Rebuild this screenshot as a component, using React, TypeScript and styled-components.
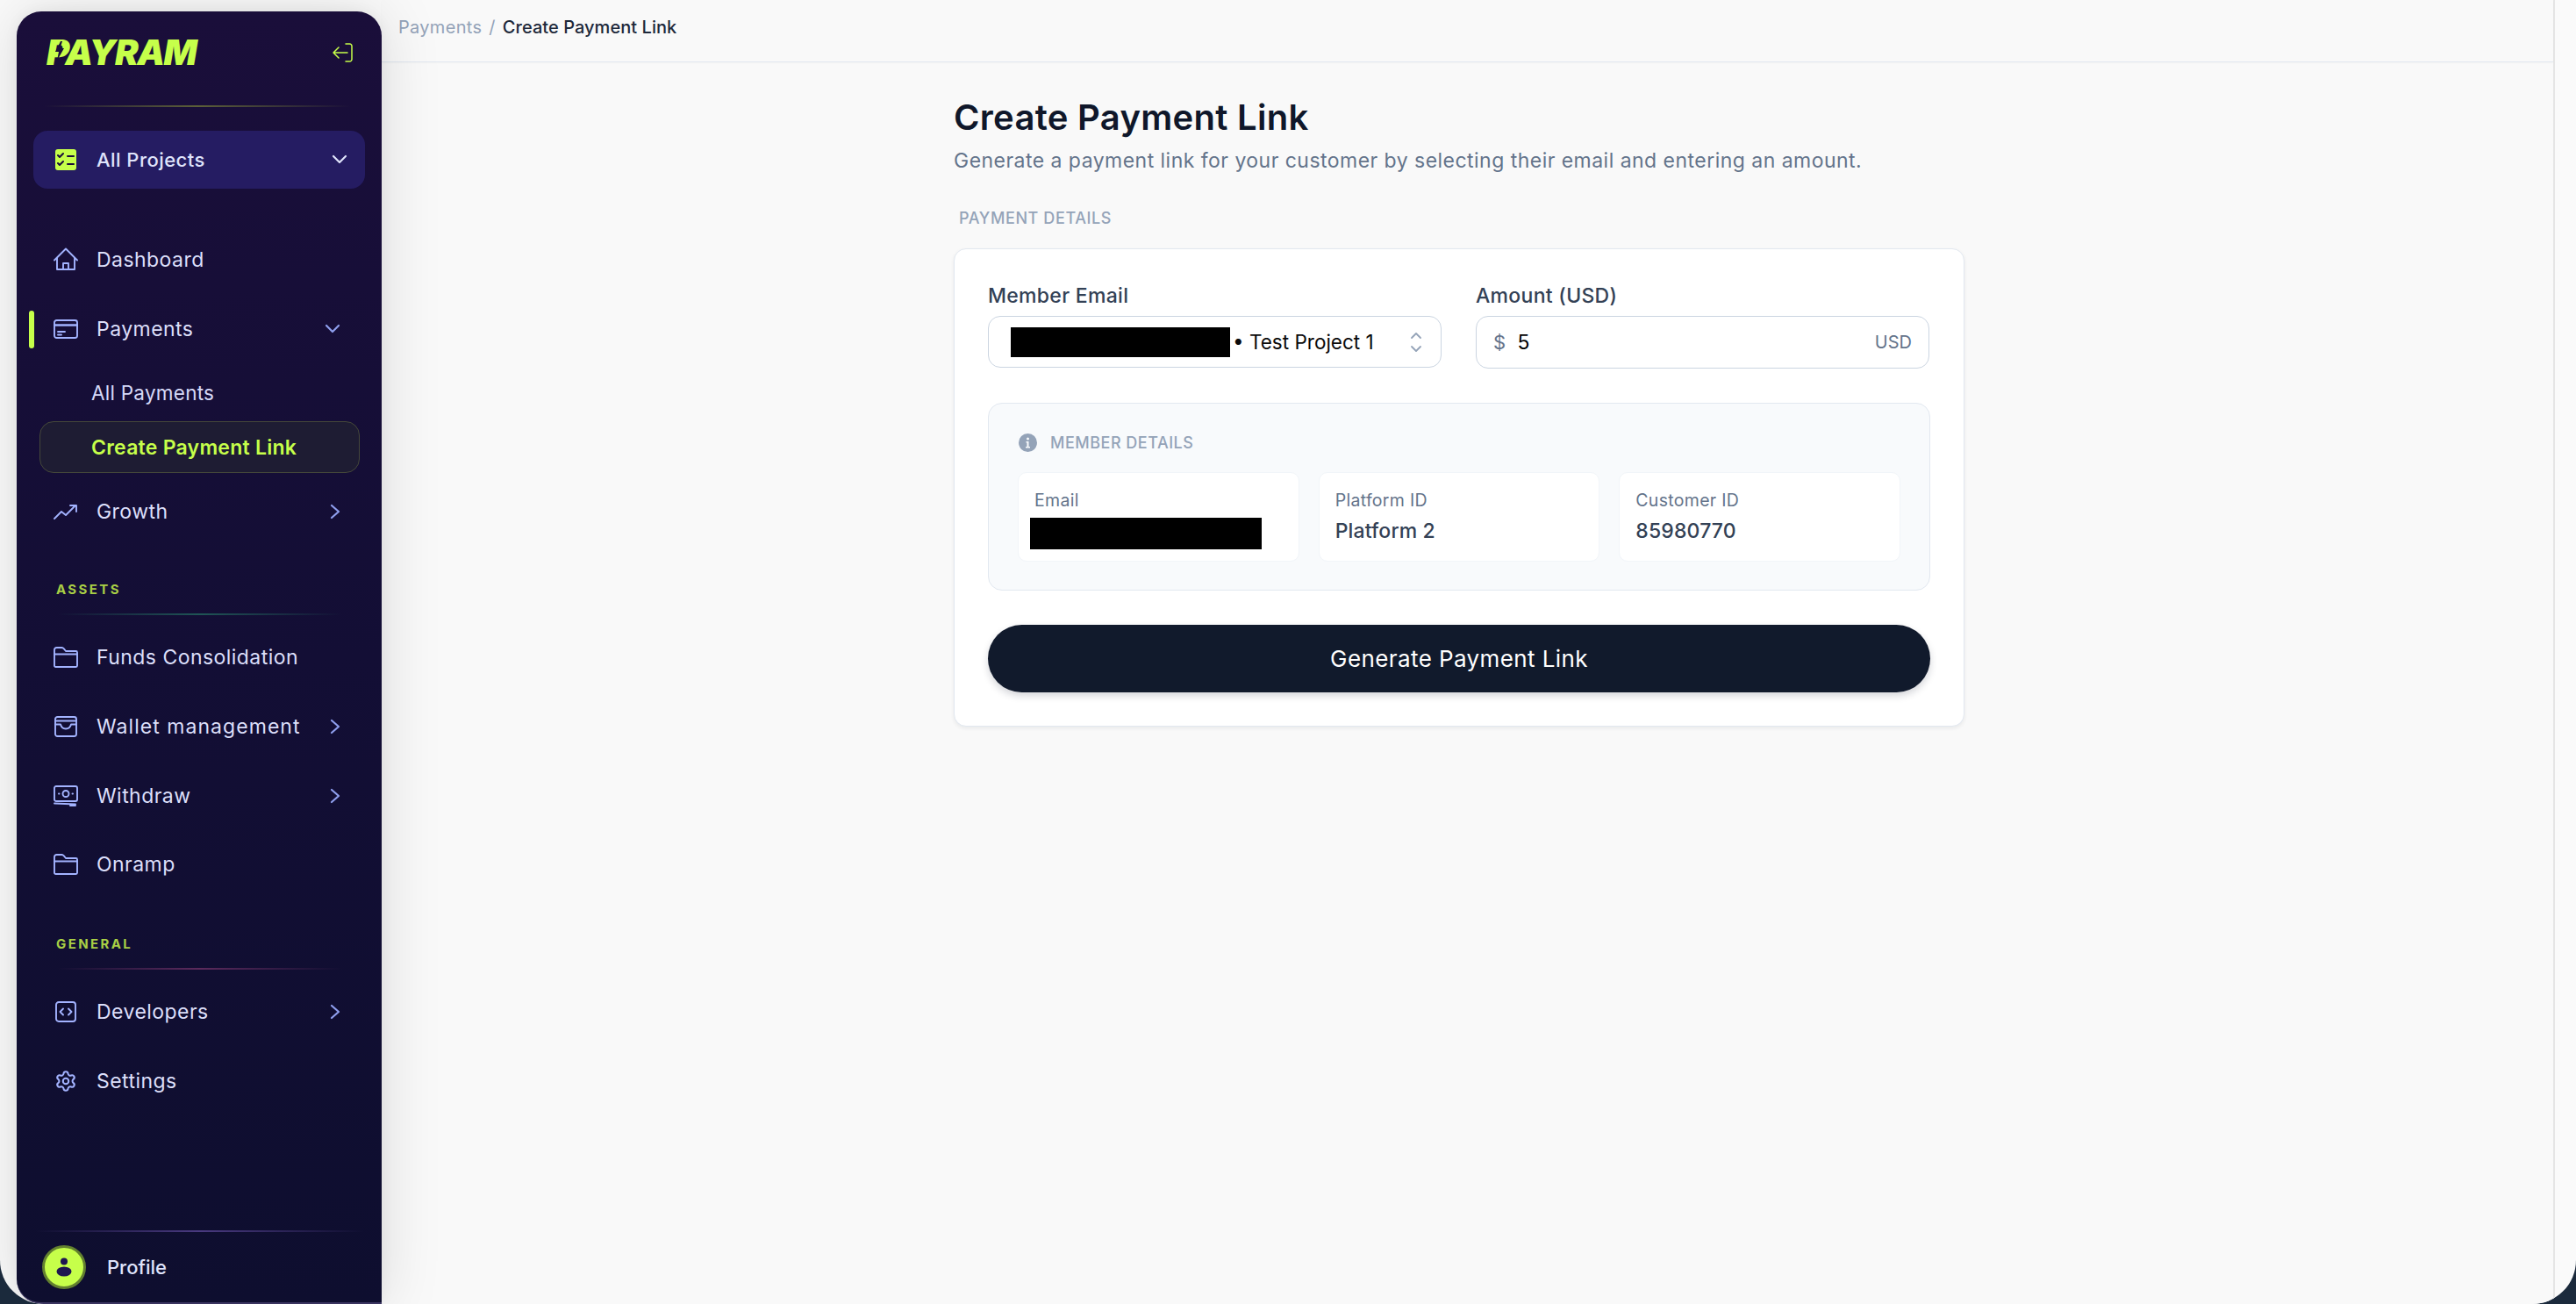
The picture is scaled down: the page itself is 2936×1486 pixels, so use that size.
import React from 'react';
import styled, { createGlobalStyle } from 'styled-components';

const GlobalStyle = createGlobalStyle`
  html, body {
    margin: 0;
    padding: 0;
    height: 100%;
    background: #1b2a3c;
  }
  * { box-sizing: border-box; }
  #root { height: 100%; }
`

const FONT = `Inter, "Liberation Sans", sans-serif`
const LIME = '#c6ff4a'

const Stroke = styled.svg`
  display: block;
  flex: none;
  fill: none;
  stroke: #a3b3ff;
  stroke-width: 1.9;
  stroke-linecap: round;
  stroke-linejoin: round;
`

const HomeIcon = () => (
  <Stroke width="28" height="28" viewBox="0 0 28 28">
    <path d="M1 14.5 14 1.5l13 13" />
    <path d="M4 12v13h20V12" />
    <path d="M11 25v-7h6v7" />
  </Stroke>
)
const CardIcon = () => (
  <Stroke width="28" height="22" viewBox="0 0 28 22">
    <rect x="1" y="1" width="26" height="20" rx="2.5" />
    <path d="M1 6.5h26" strokeWidth="2.4" />
    <path d="M5 14h8M5 17.5h4" />
  </Stroke>
)
const GrowthIcon = () => (
  <Stroke width="28" height="18" viewBox="0 0 28 18">
    <path d="M1 17 9 9l5 4 11-11" />
    <path d="M19 2h7v7" />
  </Stroke>
)
const FolderIcon = () => (
  <Stroke width="28" height="24" viewBox="0 0 28 24">
    <path d="M1 5V3.5A2.5 2.5 0 0 1 3.500 1h6c1 0 1.600.4 2.200 1.200L14 5h11.500A1.500 1.500 0 0 1 27 6.500V21.500a1.500 1.500 0 0 1-1.500 1.500h-23A1.500 1.500 0 0 1 1 21.500V5Z" />
    <path d="M1 8.500h26" />
  </Stroke>
)
const WalletIcon = () => (
  <Stroke width="26" height="24" viewBox="0 0 26 24">
    <rect x="1" y="1" width="24" height="22" rx="2.500" />
    <path d="M1 5.500h24M1 9.500h6c1 4 3 5 6 5s5-1 6-5h6" />
  </Stroke>
)
const CashIcon = () => (
  <Stroke width="28" height="24" viewBox="0 0 28 24">
    <rect x="1" y="1" width="26" height="17" rx="2" />
    <circle cx="14" cy="9.500" r="3.500" />
    <path d="M6 9.500h.5M21.500 9.500h.5M1 20.500l24 1M19 23h6" />
  </Stroke>
)
const CodeIcon = () => (
  <Stroke width="24" height="24" viewBox="0 0 24 24">
    <rect x="1" y="1" width="22" height="22" rx="3" />
    <path d="m9 8.500-3.500 3.500L9 15.500M15 8.500l3.500 3.500-3.500 3.500" />
  </Stroke>
)
const GearIcon = () => (
  <Stroke width="26" height="26" viewBox="0 0 24 24">
    <path d="M9.671 4.136a2.340 2.340 0 0 1 4.659 0 2.340 2.340 0 0 0 3.319 1.915 2.340 2.340 0 0 1 2.330 4.033 2.340 2.340 0 0 0 0 3.831 2.340 2.340 0 0 1-2.330 4.033 2.340 2.340 0 0 0-3.319 1.915 2.340 2.340 0 0 1-4.659 0 2.340 2.340 0 0 0-3.320-1.915 2.340 2.340 0 0 1-2.330-4.033 2.340 2.340 0 0 0 0-3.831A2.340 2.340 0 0 1 6.350 6.051a2.340 2.340 0 0 0 3.320-1.915" />
    <circle cx="12" cy="12" r="3" />
  </Stroke>
)
const ChevronRight = () => (
  <Stroke width="12" height="18" viewBox="0 0 12 18" style={{ stroke: '#8f9fee', strokeWidth: 2.2 }}>
    <path d="m2 2 8 7-8 7" />
  </Stroke>
)
const ChevronDown = ({ color = '#8f9fee' }: { color?: string }) => (
  <Stroke width="18" height="12" viewBox="0 0 18 12" style={{ stroke: color, strokeWidth: 2.2 }}>
    <path d="m2 2 7 7 7-7" />
  </Stroke>
)

const Window = styled.div`
  display: flex;
  height: 1486px;
  width: 2936px;
  overflow: hidden;
  background: #fafafa;
  border-radius: 0 0 50px 50px;
  font-family: ${FONT};
`

const Sidebar = styled.aside`
  position: relative;
  z-index: 2;
  display: flex;
  flex-direction: column;
  flex: none;
  width: 416px;
  margin: 13px 0 0 19px;
  border-radius: 28px 28px 0 28px;
  border-bottom: 2px solid #3b3560;
  background: linear-gradient(180deg, #1a0e3a 0%, #130e35 50%, #0e0e2f 100%);
  box-shadow: 0 0 70px rgba(0, 0, 0, 0.13), 0 0 16px rgba(0, 0, 0, 0.05);
`

const SideHeader = styled.div`
  display: flex;
  align-items: center;
  justify-content: space-between;
  height: 94px;
  padding: 0 33px 0 34px;
`

const LogoMark = styled.div`
  position: relative;
  color: ${LIME};
  font-size: 40px;
  line-height: 40px;
  font-weight: 900;
  font-style: italic;
  letter-spacing: -1.4px;
`

const LogoBolt = styled.svg`
  position: absolute;
  left: 10px;
  top: 7px;
`

const Rule = styled.div<{ $color: string; $left: number; $right: number; $top: number }>`
  flex: none;
  height: 2px;
  margin: ${p => p.$top}px ${p => p.$right}px 0 ${p => p.$left}px;
  background: linear-gradient(90deg, transparent, ${p => p.$color}, transparent);
`

const ProjectPicker = styled.div`
  display: flex;
  align-items: center;
  flex: none;
  height: 66px;
  margin: 27px 19px 0;
  padding: 0 20px 0 25px;
  border-radius: 16px;
  background: #251c62;
  color: #dfe3fb;
  font-size: 22px;
  font-weight: 500;
  letter-spacing: 0.45px;
`

const ProjectBadge = styled.div`
  display: flex;
  align-items: center;
  justify-content: center;
  width: 24px;
  height: 24px;
  margin-right: 23px;
  border-radius: 3px;
  background: ${LIME};
`

const Spacer = styled.span`
  flex: 1;
`

const Nav = styled.nav`
  display: flex;
  flex-direction: column;
  margin-top: 42px;
`

const Item = styled.div<{ $active?: boolean; $spread?: number; $top?: number }>`
  position: relative;
  display: flex;
  align-items: center;
  height: 78.700px;
  margin-top: ${p => p.$top || 0}px;
  padding: 0 47px 0 42px;
  color: #dcdffa;
  font-size: 23px;
  letter-spacing: ${p => p.$spread ?? 0.45}px;

  &::before {
    content: '';
    display: ${p => (p.$active ? 'block' : 'none')};
    position: absolute;
    left: 14px;
    top: 18px;
    width: 6px;
    height: 43px;
    border-radius: 3px;
    background: ${LIME};
  }
`

const IconSlot = styled.span`
  display: flex;
  align-items: center;
  justify-content: center;
  width: 28px;
  margin-right: 21px;
`

const SubList = styled.div`
  display: flex;
  flex-direction: column;
  gap: 8px;
  margin: 8px 25px 4px 26px;
`

const SubItem = styled.div<{ $active?: boolean }>`
  display: flex;
  align-items: center;
  height: ${p => (p.$active ? 59 : 50)}px;
  padding-left: 58px;
  border: 1px solid ${p => (p.$active ? '#45483a' : 'transparent')};
  border-radius: 16px;
  background: ${p => (p.$active ? '#1e1c33' : 'transparent')};
  color: ${p => (p.$active ? LIME : '#d5d9f8')};
  font-size: ${p => (p.$active ? 23 : 22.500)}px;
  font-weight: ${p => (p.$active ? 600 : 400)};
  letter-spacing: 0.25px;
`

const SectionLabel = styled.div<{ $top: number }>`
  height: 20px;
  margin: ${p => p.$top}px 0 0 45px;
  color: #a8cf45;
  font-size: 15px;
  line-height: 20px;
  font-weight: 700;
  letter-spacing: 2.4px;
`

const ProfileBox = styled.div`
  margin-top: auto;
`

const ProfileRow = styled.div`
  display: flex;
  align-items: center;
  height: 80px;
  padding-left: 29px;
  color: #dfe3fb;
  font-size: 22px;
  font-weight: 500;
`

const Avatar = styled.div`
  display: flex;
  align-items: center;
  justify-content: center;
  width: 50px;
  height: 50px;
  margin-right: 24px;
  border: 3px solid #62802f;
  border-radius: 50%;
  background: ${LIME};
`

const Main = styled.main`
  display: flex;
  flex-direction: column;
  flex: none;
  width: 2477px;
  border-right: 2px solid #e5e5e5;
  background: #f9f9f9;
`

const TopBar = styled.header`
  display: flex;
  align-items: center;
  flex: none;
  gap: 8px;
  height: 71px;
  padding: 0 0 8px 19px;
  border-bottom: 1px solid #e2e8f0;
  box-shadow: 0 1px 2px rgba(15, 23, 42, 0.03);
  font-size: 20px;
`

const Crumb = styled.span<{ $current?: boolean }>`
  color: ${p => (p.$current ? '#1e293b' : '#94a3b8')};
  font-weight: ${p => (p.$current ? 500 : 400)};
  letter-spacing: ${p => (p.$current ? 0.05 : 0.3)}px;
`

const Content = styled.div`
  width: 1804px;
  padding: 40px 0 0 652px;
`

const Title = styled.h1`
  margin: 0;
  color: #0f172a;
  font-size: 40px;
  line-height: 46px;
  font-weight: 600;
  letter-spacing: 0.3px;
`

const Subtitle = styled.p`
  margin: 10px 0 0;
  color: #64748b;
  font-size: 23px;
  line-height: 32px;
  letter-spacing: 0.47px;
`

const Caption = styled.div`
  margin: 38px 0 0 6px;
  color: #94a3b8;
  font-size: 18px;
  line-height: 24px;
  font-weight: 500;
  letter-spacing: 0.6px;
`

const Card = styled.section`
  margin-top: 22px;
  padding: 39px 38px 38px;
  border: 1px solid #e2e8f0;
  border-radius: 14px;
  background: #fff;
  box-shadow: 0 2px 4px rgba(15, 23, 42, 0.07);
`

const Fields = styled.div`
  display: grid;
  grid-template-columns: 517px 517px;
  gap: 39px;
`

const Field = styled.div`
  display: flex;
  flex-direction: column;
  gap: 9px;
`

const FieldLabel = styled.label`
  color: #334155;
  font-size: 23px;
  line-height: 28px;
  font-weight: 500;
  letter-spacing: 0.3px;
`

const Control = styled.div<{ $height: number }>`
  display: flex;
  align-items: center;
  height: ${p => p.$height}px;
  padding: 0 19px;
  border: 1px solid #cbd5e1;
  border-radius: 14px;
  background: #fff;
`

const Redacted = styled.div<{ $width: number; $height: number; $shift?: number; $top?: number }>`
  flex: none;
  width: ${p => p.$width}px;
  height: ${p => p.$height}px;
  margin: ${p => p.$top || 0}px 0 0 ${p => p.$shift || 0}px;
  background: #000;
`

const SelectText = styled.span`
  margin-left: 3px;
  color: #0a0a0a;
  font-size: 22.500px;
  white-space: nowrap;
`

const Sorter = styled.svg`
  margin-left: auto;
  margin-right: 2px;
  fill: none;
  stroke: #94a3b8;
  stroke-width: 1.8;
  stroke-linecap: round;
  stroke-linejoin: round;
`

const Prefix = styled.span`
  color: #64748b;
  font-size: 22px;
`

const AmountValue = styled.span`
  margin-left: 14px;
  color: #000;
  font-family: "Liberation Sans", sans-serif;
  font-size: 23px;
`

const Suffix = styled.span`
  margin-left: auto;
  color: #64748b;
  font-size: 20px;
`

const MemberPanel = styled.div`
  margin-top: 39px;
  padding: 32px 33px;
  border: 1px solid #e2e8f0;
  border-radius: 16px;
  background: #f8fafc;
`

const PanelHead = styled.div`
  display: flex;
  align-items: center;
  gap: 15px;
  height: 24px;
  padding-left: 1px;
  color: #94a3b8;
  font-size: 18px;
  font-weight: 500;
  letter-spacing: 0.5px;
`

const Tiles = styled.div`
  display: grid;
  grid-template-columns: repeat(3, 1fr);
  gap: 22px;
  margin-top: 22px;
`

const Tile = styled.div`
  height: 102px;
  padding: 20px 0 0 18px;
  border: 1px solid #f1f5f9;
  border-radius: 10px;
  background: #fff;
`

const TileLabel = styled.div`
  color: #64748b;
  font-size: 19.500px;
  line-height: 22px;
  letter-spacing: 0.3px;
`

const TileValue = styled.div`
  margin-top: 9px;
  color: #334155;
  font-size: 23px;
  line-height: 30px;
  font-weight: 500;
  letter-spacing: 0.15px;
`

const Submit = styled.button`
  display: block;
  width: 100%;
  height: 77px;
  margin-top: 39px;
  border: 0;
  border-radius: 39px;
  background: #111a2c;
  box-shadow: 0 4px 8px rgba(15, 23, 42, 0.18);
  color: #fff;
  font-family: ${FONT};
  font-size: 26px;
  letter-spacing: 0.4px;
`

const App = () => (
  <Window>
    <GlobalStyle />
    <Sidebar>
      <SideHeader>
        <LogoMark>
          PAYRAM
          <LogoBolt width="10" height="22" viewBox="0 0 10 22">
            <path d="M6 0 0 12h4l-2 10 8-14H5.500L8 0Z" fill="#1a0e3a" />
          </LogoBolt>
        </LogoMark>
        <svg width="23" height="22" viewBox="0 0 23 22" fill="none" stroke={LIME} strokeWidth="1.500" strokeLinecap="round" strokeLinejoin="round">
          <path d="M15 1h4.500A2.500 2.500 0 0 1 22 3.500v15a2.500 2.500 0 0 1-2.500 2.500H15" />
          <path d="M17 11H1M7 5l-6 6 6 6" />
        </svg>
      </SideHeader>
      <Rule $color="#5c5f38" $left={31} $right={35} $top={13} />

      <ProjectPicker>
        <ProjectBadge>
          <svg width="20" height="18" viewBox="0 0 20 18" fill="none" stroke="#1a0e3a" strokeWidth="2" strokeLinecap="round" strokeLinejoin="round">
            <path d="m1 4 2 2 4-4M1 13l2 2 4-4M12 5h7M12 14h7" />
          </svg>
        </ProjectBadge>
        All Projects
        <Spacer />
        <ChevronDown color="#dfe3fb" />
      </ProjectPicker>

      <Nav>
        <Item>
          <IconSlot><HomeIcon /></IconSlot>
          Dashboard
        </Item>
        <Item $active>
          <IconSlot><CardIcon /></IconSlot>
          Payments
          <Spacer />
          <ChevronDown />
        </Item>
        <SubList>
          <SubItem>All Payments</SubItem>
          <SubItem $active>Create Payment Link</SubItem>
        </SubList>
        <Item>
          <IconSlot><GrowthIcon /></IconSlot>
          Growth
          <Spacer />
          <ChevronRight />
        </Item>

        <SectionLabel $top={40}>ASSETS</SectionLabel>
        <Rule $color="#1f5555" $left={46} $right={45} $top={17} />
        <Item $top={9}>
          <IconSlot><FolderIcon /></IconSlot>
          Funds Consolidation
        </Item>
        <Item $spread={1.05}>
          <IconSlot><WalletIcon /></IconSlot>
          Wallet management
          <Spacer />
          <ChevronRight />
        </Item>
        <Item>
          <IconSlot><CashIcon /></IconSlot>
          Withdraw
          <Spacer />
          <ChevronRight />
        </Item>
        <Item>
          <IconSlot><FolderIcon /></IconSlot>
          Onramp
        </Item>

        <SectionLabel $top={41}>GENERAL</SectionLabel>
        <Rule $color="#5c2a5c" $left={46} $right={45} $top={17} />
        <Item $top={9}>
          <IconSlot><CodeIcon /></IconSlot>
          Developers
          <Spacer />
          <ChevronRight />
        </Item>
        <Item>
          <IconSlot><GearIcon /></IconSlot>
          Settings
        </Item>
      </Nav>

      <ProfileBox>
        <Rule $color="#4a3a80" $left={21} $right={20} $top={0} />
        <ProfileRow>
          <Avatar>
            <svg width="18" height="22" viewBox="0 0 18 22" fill="#1e1650">
              <circle cx="9" cy="4.500" r="4" />
              <ellipse cx="9" cy="16" rx="8.500" ry="5.500" />
            </svg>
          </Avatar>
          Profile
        </ProfileRow>
      </ProfileBox>
    </Sidebar>

    <Main>
      <TopBar>
        <Crumb>Payments</Crumb>
        <Crumb>/</Crumb>
        <Crumb $current>Create Payment Link</Crumb>
      </TopBar>
      <Content>
        <Title>Create Payment Link</Title>
        <Subtitle>Generate a payment link for your customer by selecting their email and entering an amount.</Subtitle>
        <Caption>PAYMENT DETAILS</Caption>
        <Card>
          <Fields>
            <Field>
              <FieldLabel>Member Email</FieldLabel>
              <Control $height={59}>
                <Redacted $width={250} $height={34} $shift={6} />
                <SelectText>• Test Project 1</SelectText>
                <Sorter width="14" height="24" viewBox="0 0 14 24">
                  <path d="m2 7 5-5 5 5M2 17l5 5 5-5" />
                </Sorter>
              </Control>
            </Field>
            <Field>
              <FieldLabel>Amount (USD)</FieldLabel>
              <Control $height={60}>
                <Prefix>$</Prefix>
                <AmountValue>5</AmountValue>
                <Suffix>USD</Suffix>
              </Control>
            </Field>
          </Fields>

          <MemberPanel>
            <PanelHead>
              <svg width="21" height="21" viewBox="0 0 21 21">
                <circle cx="10.500" cy="10.500" r="10.500" fill="#94a3b8" />
                <circle cx="10.500" cy="6" r="1.500" fill="#f8fafc" />
                <path d="M8.500 9h3v6h1.500v1.500H8V15h1.500v-4.500h-1Z" fill="#f8fafc" />
              </svg>
              MEMBER DETAILS
            </PanelHead>
            <Tiles>
              <Tile>
                <TileLabel>Email</TileLabel>
                <Redacted $width={264} $height={36} $shift={-5} $top={9} />
              </Tile>
              <Tile>
                <TileLabel>Platform ID</TileLabel>
                <TileValue>Platform 2</TileValue>
              </Tile>
              <Tile>
                <TileLabel>Customer ID</TileLabel>
                <TileValue>85980770</TileValue>
              </Tile>
            </Tiles>
          </MemberPanel>

          <Submit>Generate Payment Link</Submit>
        </Card>
      </Content>
    </Main>
  </Window>
)

export default App
